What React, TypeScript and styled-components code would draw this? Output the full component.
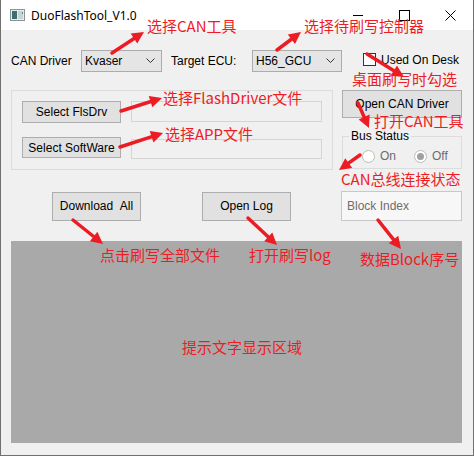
import * as React from "react"
import styled, { createGlobalStyle } from "styled-components"

const Global = createGlobalStyle`
  html, body {
    margin: 0;
    padding: 0;
    background: #ffffff;
  }
  * {
    box-sizing: border-box;
  }
`

const ui = `"Liberation Sans", Arial, sans-serif`
const red = "#ED1C24"

const Frame = styled.div`
  position: relative;
  width: 474px;
  height: 456px;
  border: 1px solid #707070;
  border-top: none;
  background: #f0f0f0;
  font-family: ${ui};
  font-size: 12px;
  color: #000;
  overflow: hidden;
`

const TitleBar = styled.div`
  height: 30px;
  background: #ffffff;
  display: flex;
  align-items: center;
`

const AppIcon = styled.svg`
  margin-left: 9px;
  margin-right: 6px;
`

const Caption = styled.div`
  font-family: "Noto Sans", "Segoe UI", sans-serif;
  font-size: 12px;
  color: #000;
  flex: 1;
`

const CaptionButton = styled.div`
  width: 46px;
  height: 30px;
  display: flex;
  align-items: center;
  justify-content: center;
`

const Client = styled.div`
  padding: 20px 0 0 10px;
  display: flex;
  flex-direction: column;
`

const Row = styled.div<{ $top?: number; $align?: string }>`
  display: flex;
  align-items: ${(p) => p.$align ?? "center"};
  margin-top: ${(p) => p.$top ?? 0}px;
`

const Label = styled.div<{ $w: number }>`
  width: ${(p) => p.$w}px;
  white-space: nowrap;
`

const Combo = styled.div<{ $w: number }>`
  width: ${(p) => p.$w}px;
  height: 22px;
  border: 1px solid #acacac;
  background: #e5e5e5;
  display: flex;
  align-items: center;
  justify-content: space-between;
  padding: 0 6px 0 3px;
  font-size: 12px;
`

const Check = styled.div`
  display: flex;
  align-items: center;
  margin-left: 21px;
  margin-top: -3px;
  gap: 5px;
`

const CheckBox = styled.div`
  width: 13px;
  height: 13px;
  border: 1px solid #333;
  background: #fff;
`

const Group = styled.div<{ $w: number; $h: number }>`
  position: relative;
  width: ${(p) => p.$w}px;
  height: ${(p) => p.$h}px;
  border: 1px solid #dcdcdc;
`

const GroupInner = styled.div`
  padding: 10px 0 0 10px;
  display: flex;
  flex-direction: column;
  gap: 14px;
`

const GroupTitle = styled.div`
  position: absolute;
  top: -8px;
  left: 6px;
  padding: 0 2px;
  background: #f0f0f0;
  line-height: 14px;
`

const FileRow = styled.div<{ $boxTop: number }>`
  display: flex;
  align-items: flex-start;
  gap: 10px;
  & > :last-child {
    margin-top: ${(p) => p.$boxTop}px;
  }
`

const Button = styled.div<{ $w: number; $h: number }>`
  width: ${(p) => p.$w}px;
  height: ${(p) => p.$h}px;
  background: #e1e1e1;
  border: 1px solid #adadad;
  display: flex;
  align-items: center;
  justify-content: center;
  white-space: nowrap;
`

const TextBox = styled.div<{ $w: number; $h: number; $light?: boolean }>`
  width: ${(p) => p.$w}px;
  height: ${(p) => p.$h}px;
  border: 1px solid ${(p) => (p.$light ? "#c8c8c8" : "#d4d4d4")};
  background: ${(p) => (p.$light ? "#f7f7f7" : "#f0f0f0")};
  display: flex;
  align-items: center;
  padding-left: 5px;
  color: #6d6d6d;
`

const SideColumn = styled.div`
  margin-left: 9px;
  display: flex;
  flex-direction: column;
  gap: 18px;
`

const Radios = styled.div`
  display: flex;
  align-items: center;
  padding: 12px 0 0 19px;
  color: #6d6d6d;
`

const Radio = styled.div`
  display: flex;
  align-items: center;
  gap: 5px;
  margin-right: 18px;
`

const RadioDot = styled.div<{ $on?: boolean }>`
  width: 13px;
  height: 13px;
  border-radius: 50%;
  border: 1px solid #bcbcbc;
  background: #fff;
  display: flex;
  align-items: center;
  justify-content: center;
  &::after {
    content: "";
    width: 7px;
    height: 7px;
    border-radius: 50%;
    background: ${(p) => (p.$on ? "#a0a0a0" : "transparent")};
  }
`

const Spacer = styled.div<{ $w: number }>`
  width: ${(p) => p.$w}px;
  flex: none;
`

const Output = styled.div`
  margin-top: 20px;
  width: 451px;
  height: 202px;
  background: #a9a9a9;
`

const Overlay = styled.div`
  position: absolute;
  inset: 0;
  pointer-events: none;
`

const Note = styled.div`
  position: absolute;
  font-family: "Noto Sans CJK SC", "Noto Sans", sans-serif;
  font-size: 15px;
  line-height: 15px;
  color: ${red};
  white-space: nowrap;
`

const notes: [string, number, number][] = [
  ["选择CAN工具", 146, 18],
  ["选择待刷写控制器", 303, 18],
  ["桌面刷写时勾选", 351, 71],
  ["选择FlashDriver文件", 162, 90],
  ["选择APP文件", 164, 126],
  ["打开CAN工具", 373, 113],
  ["CAN总线连接状态", 340, 171],
  ["点击刷写全部文件", 99, 247],
  ["打开刷写log", 248, 247],
  ["数据Block序号", 359, 251],
  ["提示文字显示区域", 181, 339],
]

const arrows: [number, number, number, number][] = [
  [111, 53, 143, 32],
  [276, 50, 300, 32],
  [366, 54, 403, 77],
  [120, 111, 161, 98],
  [119, 147, 162, 133],
  [357, 103, 368, 128],
  [359, 155, 338, 170],
  [72, 220, 102, 244],
  [247, 218, 276, 245],
  [377, 220, 400, 249],
]

const Arrow = ({ a }: { a: [number, number, number, number] }) => {
  const [x1, y1, x2, y2] = a
  const dx = x2 - x1
  const dy = y2 - y1
  const len = Math.hypot(dx, dy)
  const ux = dx / len
  const uy = dy / len
  const hl = 12
  const hw = 6
  const bx = x2 - ux * hl
  const by = y2 - uy * hl
  const pts = `${x2},${y2} ${bx - uy * hw},${by + ux * hw} ${bx + uy * hw},${by - ux * hw}`
  return (
    <g>
      <line x1={x1} y1={y1} x2={bx + ux * 2} y2={by + uy * 2} stroke={red} strokeWidth={3.5} strokeLinecap="round" />
      <polygon points={pts} fill={red} />
    </g>
  )
}

const Chevron = () => (
  <svg width="9" height="6" viewBox="0 0 9 6">
    <path d="M0.5 0.5 L4.5 4.5 L8.5 0.5" fill="none" stroke="#333" strokeWidth="1" />
  </svg>
)

export default function App() {
  return (
    <>
      <Global />
      <Frame>
        <TitleBar>
          <AppIcon width="15" height="12" viewBox="0 0 15 12">
            <rect x="0.5" y="0.5" width="14" height="11" fill="#e8eef0" stroke="#8a9499" />
            <rect x="2" y="2" width="5" height="8" fill="#3f6e72" />
            <rect x="8" y="2" width="5" height="8" fill="#c9d3d6" />
            <rect x="12" y="3" width="1" height="2" fill="#5a8f5a" />
          </AppIcon>
          <Caption>DuoFlashTool_V1.0</Caption>
          <CaptionButton>
            <svg width="11" height="11" viewBox="0 0 11 11">
              <path d="M0 5.5 H10" stroke="#000" strokeWidth="1" />
            </svg>
          </CaptionButton>
          <CaptionButton>
            <svg width="11" height="11" viewBox="0 0 11 11">
              <rect x="0.5" y="0.5" width="10" height="10" fill="none" stroke="#000" strokeWidth="1" />
            </svg>
          </CaptionButton>
          <CaptionButton>
            <svg width="11" height="11" viewBox="0 0 11 11">
              <path d="M0.5 0.5 L10.5 10.5 M10.5 0.5 L0.5 10.5" stroke="#000" strokeWidth="1" />
            </svg>
          </CaptionButton>
        </TitleBar>

        <Client>
          <Row>
            <Label $w={70}>CAN Driver</Label>
            <Combo $w={81}>
              Kvaser <Chevron />
            </Combo>
            <Spacer $w={9} />
            <Label $w={81}>Target ECU:</Label>
            <Combo $w={90}>
              H56_GCU <Chevron />
            </Combo>
            <Check>
              <CheckBox />
              Used On Desk
            </Check>
          </Row>

          <Row $top={18} $align="flex-start">
            <Group $w={322} $h={80}>
              <GroupInner>
                <FileRow $boxTop={0}>
                  <Button $w={99} $h={22}>Select FlsDrv</Button>
                  <TextBox $w={191} $h={21} />
                </FileRow>
                <FileRow $boxTop={2}>
                  <Button $w={99} $h={21}>Select SoftWare</Button>
                  <TextBox $w={191} $h={20} />
                </FileRow>
              </GroupInner>
            </Group>
            <SideColumn>
              <Button $w={120} $h={28}>Open CAN Driver</Button>
              <Group $w={120} $h={33}>
                <GroupTitle>Bus Status</GroupTitle>
                <Radios>
                  <Radio>
                    <RadioDot />
                    On
                  </Radio>
                  <Radio>
                    <RadioDot $on />
                    Off
                  </Radio>
                </Radios>
              </Group>
            </SideColumn>
          </Row>

          <Row $top={21}>
            <Spacer $w={41} />
            <Button $w={89} $h={29}>Download&nbsp;&nbsp;All</Button>
            <Spacer $w={61} />
            <Button $w={89} $h={29}>Open Log</Button>
            <Spacer $w={50} />
            <TextBox $w={121} $h={30} $light>
              Block Index
            </TextBox>
          </Row>

          <Output />
        </Client>

        <Overlay>
          {notes.map(([t, x, y]) => (
            <Note key={t} style={{ left: x, top: y }}>
              {t}
            </Note>
          ))}
          <svg width="474" height="456" style={{ position: "absolute", left: 0, top: 0 }}>
            {arrows.map((a, i) => (
              <Arrow key={i} a={a} />
            ))}
          </svg>
        </Overlay>
      </Frame>
    </>
  )
}
